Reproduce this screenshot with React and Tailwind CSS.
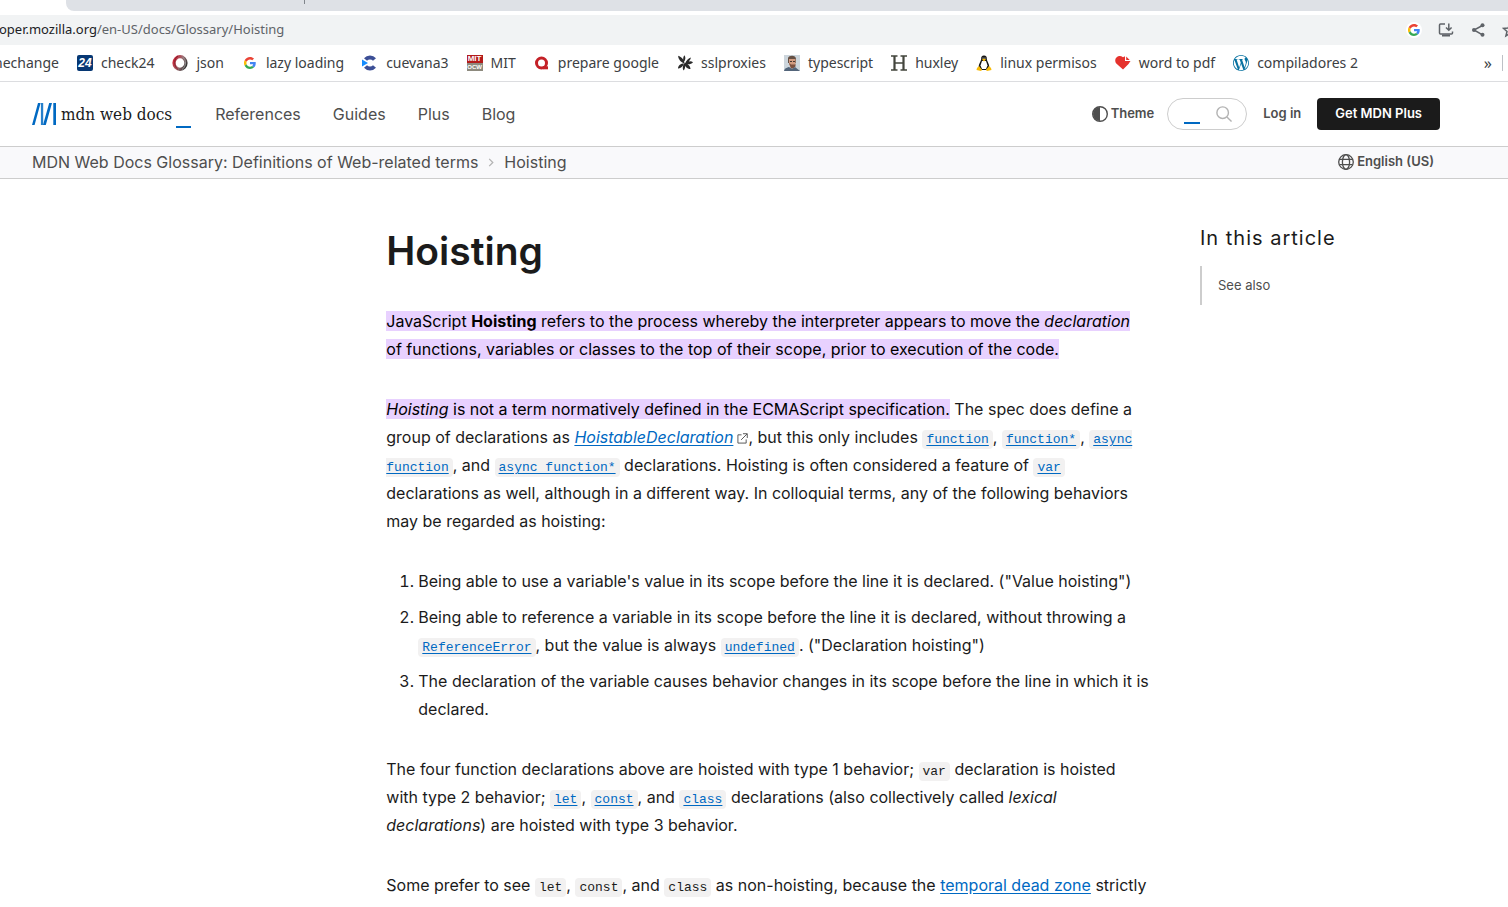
const link = "text-[#0069c2] underline underline-offset-2";

function Code({ children, href }) {
  const code = (
    <code className="rounded bg-[#f2f1f1] px-1 py-[2px] font-['Liberation_Mono',monospace] text-[13px] leading-none">{children}</code>
  );
  return href ? <a href="#" className={link}>{code}</a> : code;
}

function Google({ className }) {
  return (
    <svg viewBox="0 0 48 48" className={className} aria-hidden="true">
      <path fill="#EA4335" d="M24 9.5c3.5 0 6.7 1.2 9.2 3.6l6.9-6.9C35.9 2.4 30.5 0 24 0 14.6 0 6.5 5.4 2.6 13.2l8 6.2C12.4 13.7 17.7 9.5 24 9.5z" />
      <path fill="#4285F4" d="M47 24.5c0-1.6-.2-3.1-.4-4.5H24v9h12.9c-.6 3-2.200 5.500-4.700 7.200l7.700 6C44.400 38 47 31.800 47 24.500z" />
      <path fill="#FBBC05" d="M10.500 28.600a14.500 14.500 0 0 1 0-9.200l-8-6.200a24 24 0 0 0 0 21.600l8-6.200z" />
      <path fill="#34A853" d="M24 48c6.500 0 11.900-2.100 15.900-5.800l-7.700-6c-2.200 1.500-4.900 2.300-8.200 2.300-6.300 0-11.600-4.200-13.500-9.900l-8 6.200C6.500 42.600 14.600 48 24 48z" />
    </svg>
  );
}

const icons = {
  check24: (
    <span className="flex size-4 items-center justify-center rounded-xs bg-[#063773] font-['Liberation_Sans',sans-serif] text-xs font-bold italic text-white">24</span>
  ),
  json: (
    <svg viewBox="0 0 16 16" className="size-4" fill="none">
      <defs>
        <linearGradient id="jsonRing" x1="0" y1="0.3" x2="1" y2="0.8">
          <stop offset="0" stopColor="#c22b3c" />
          <stop offset="0.5" stopColor="#9b6b70" />
          <stop offset="1" stopColor="#333" />
        </linearGradient>
      </defs>
      <ellipse cx="8" cy="8" rx="6" ry="6.300" stroke="url(#jsonRing)" strokeWidth="3.200" />
      <path d="M6 1.200C1.800 3 1.500 11.500 6 14.500" stroke="#8b1d2c" strokeWidth="1" />
      <path d="M10.500 2c4 2.500 4 9.500-.5 12.500" stroke="#999" strokeWidth="1" />
    </svg>
  ),
  google: <span className="flex size-4 items-center justify-center"><Google className="size-3" /></span>,
  cuevana: (
    <svg viewBox="0 0 16 16" className="size-4" fill="none">
      <path d="M12.500 4.500A6 6 0 0 0 3.500 4.500M3.500 11.500a6 6 0 0 0 9 0" stroke="#3c4f96" strokeWidth="4" />
      <path d="M0 4.500l6 3.500-6 3.500z" fill="#158cff" />
    </svg>
  ),
  mit: (
    <span className="flex size-4 flex-col font-['Liberation_Sans',sans-serif] text-[8px] leading-[8px] font-bold text-white">
      <span className="flex h-2 justify-center bg-[#b31b1b]">MIT</span>
      <span className="flex h-2 justify-center overflow-hidden bg-[#8d8a7e] text-[6px]">OCW</span>
    </span>
  ),
  prepare: (
    <svg viewBox="0 0 16 16" className="size-4" fill="none" stroke="#c42127" strokeWidth="3">
      <circle cx="7.500" cy="8" r="5" />
      <path d="M9 12.800h5" />
    </svg>
  ),
  ssl: (
    <svg viewBox="0 0 16 16" className="size-4" fill="#2b2b2b">
      <path d="M7.500 8.500C4 7.500 1 4 1.200.800 4.500 2 7.500 5 7.500 8.500zM6.800 7C5.800 4 6 1.500 7.500.2 9 2.500 8.500 5 6.800 7zM8 8.500c1.500-3.500 3.500-5.500 6-6C13.500 5.500 11 7.500 8 8.500zM8 8.500c2.500-2.300 6-2.800 8-1.300C14 9.500 11 9.700 8 8.500zM7.500 8c3.500 1 6 3 6 6-3.500 0-6-2.500-6-6zM7.500 8.500c1 3 .8 5.500-1 7-1.300-2.500-.8-5 1-7zM7 8.300c-1 3.500-3.500 5.500-6 5.200 0-3 3-5 6-5.200z" />
    </svg>
  ),
  typescript: (
    <svg viewBox="0 0 16 16" className="size-4">
      <path fill="#ccd5dc" d="M0 0h16v16H0z" />
      <path fill="#655044" d="M4 3c1-3 8-3 8 1v4H4z" />
      <path fill="#d29b80" d="M5 4h6.500v5L9 13H7L5 9z" />
      <path fill="#7c5140" d="M5 8l2 1.500h4l.5-1v3L9 13.500H7z" />
      <path fill="#53657a" d="M0 16c1-3 2-3 5-4l3 2 3-2 5 4z" />
      <path fill="#46362f" d="M6 6h2v1H6zM9 6h2v1H9z" />
    </svg>
  ),
  huxley: (
    <svg viewBox="0 0 16 16" className="size-4" stroke="#43453d" fill="none">
      <path strokeWidth="2.200" d="M3.500 1v14M12.500 1v14" />
      <path strokeWidth="1.300" d="M0 1h6.500M0 15h6.500M9.500 1H16M9.500 15H16M4 8h8" />
    </svg>
  ),
  linux: (
    <svg viewBox="0 0 16 16" className="size-4">
      <path fill="#151515" d="M8 .5c2.200 0 3 1.500 2.800 3.500C11 7 14 9 13 13l-3 2H6l-3-2C2 9 5 7 5.200 4 5 2 5.800.5 8 .5z" />
      <path fill="#fff" d="M6 6h4l1.500 4.500L10 14H6l-1.500-3.500z" />
      <path fill="#f8bb08" d="M6 4.500L8 3.500l2 1L8 6.500zM3 11l3 4-1 1-4.500-1L1 13zM13 11l-3 4 1 1 4.500-1-.5-2z" />
      <circle cx="7" cy="3" r=".6" fill="#fff" /><circle cx="9" cy="3" r=".6" fill="#fff" />
    </svg>
  ),
  heart: (
    <svg viewBox="0 0 16 16" className="size-4">
      <path fill="#e5322d" d="M8 14.500L1.300 8.500C-2 4.500 3-1.500 8 2.300L10 1.300V6h5.500L13.500 9z" />
      <path fill="#e5322d" d="M11.200 1.500l3.500 3.500h-3.500z" />
    </svg>
  ),
  wordpress: (
    <svg viewBox="0 0 24 24" className="size-4">
      <path fill="#0872a1" d="M21.469 6.825c.84 1.537 1.318 3.300 1.318 5.175 0 3.979-2.156 7.456-5.363 9.325l3.295-9.527c.615-1.540.820-2.771.820-3.864 0-.405-.026-.780-.070-1.110m-7.981.105c.647-.030 1.232-.105 1.232-.105.582-.075.514-.930-.067-.899 0 0-1.755.135-2.880.135-1.064 0-2.850-.150-2.850-.150-.585-.030-.661.855-.075.885 0 0 .540.061 1.125.090l1.680 4.605-2.370 7.080L5.354 6.900c.649-.030 1.234-.100 1.234-.100.585-.075.516-.930-.065-.896 0 0-1.746.138-2.874.138-.200 0-.438-.008-.690-.015C4.911 3.150 8.235 1.215 12 1.215c2.809 0 5.365 1.072 7.286 2.833-.046-.003-.091-.009-.141-.009-1.060 0-1.812.923-1.812 1.914 0 .890.513 1.643 1.060 2.531.411.720.890 1.643.890 2.977 0 .915-.354 1.994-.821 3.479l-1.075 3.585-3.900-11.610zM12 22.784c-1.059 0-2.081-.153-3.048-.437l3.237-9.406 3.315 9.087c.024.053.050.101.078.149-1.120.393-2.325.609-3.582.609M1.211 12c0-1.564.336-3.050.935-4.390L7.290 21.709C3.694 19.960 1.212 16.271 1.211 12M12 0C5.385 0 0 5.385 0 12s5.385 12 12 12 12-5.385 12-12S18.615 0 12 0" />
    </svg>
  ),
};

const bookmarks = [
  ["check24", "check24"],
  ["json", "json"],
  ["google", "lazy loading"],
  ["cuevana", "cuevana3"],
  ["mit", "MIT"],
  ["prepare", "prepare google"],
  ["ssl", "sslproxies"],
  ["typescript", "typescript"],
  ["huxley", "huxley"],
  ["linux", "linux permisos"],
  ["heart", "word to pdf"],
  ["wordpress", "compiladores 2"],
];

function BrowserChrome() {
  return (
    <div className="overflow-hidden font-['Noto_Sans',sans-serif]">
      <div className="flex h-[11px] pl-[66px]">
        <div className="flex flex-1 rounded-bl-lg bg-[#dee1e6] pl-[238px]">
          <span className="h-1 w-px bg-[#80858b]" />
        </div>
      </div>
      <div className="mt-1 flex h-[30px] items-center justify-between bg-[#f1f3f4]">
        <div className="-ml-px text-[13px] whitespace-nowrap text-[#5f6368]">
          <span className="text-[#202124]">oper.mozilla.org</span>/en-US/docs/Glossary/Hoisting
        </div>
        <div className="-mr-[10px] flex items-center gap-4 text-[#5f6368]">
          <button aria-label="Search with Google" className="flex size-4 items-center justify-center rounded-full bg-white"><Google className="size-3" /></button>
          <button aria-label="Install page">
            <svg viewBox="0 0 16 16" className="size-4" fill="none" stroke="currentColor" strokeWidth="1.500">
              <path d="M7 2H2.500q-1 0-1 1v8q0 1 1 1h11q1 0 1-1V9.500M10.800 1.500v6M8 5.500l2.800 2.800 2.800-2.800" />
              <path strokeWidth="2" d="M4 13.500h8" />
            </svg>
          </button>
          <button aria-label="Share">
            <svg viewBox="0 0 16 16" className="size-4" fill="currentColor">
              <path fill="none" stroke="currentColor" strokeWidth="1.500" d="M12.500 3.500L4 8l8.500 4.800" />
              <circle cx="12.500" cy="3.300" r="2" /><circle cx="4" cy="8" r="2" /><circle cx="12.500" cy="12.800" r="2" />
            </svg>
          </button>
          <button aria-label="Bookmark this tab">
            <svg viewBox="0 0 16 16" className="size-4" fill="none" stroke="currentColor" strokeWidth="1.500">
              <path d="M8 1.800l1.900 4.200 4.600.4-3.500 3 1.100 4.500L8 11.500l-4.100 2.400L5 9.400l-3.500-3 4.600-.4z" />
            </svg>
          </button>
        </div>
      </div>
      <div className="flex h-[37px] items-center border-b border-[#dcdde0] text-sm whitespace-nowrap text-[#3c4043]">
        <a href="#" className="-ml-[6px]">nechange</a>
        {bookmarks.map(([icon, label]) => (
          <a key={label} href="#" className="ml-[18px] flex items-center gap-2">
            {icons[icon]}
            {label}
          </a>
        ))}
        <button aria-label="More bookmarks" className="ml-auto text-base">»</button>
        <span className="mr-[5px] ml-[10px] h-4 w-px bg-[#bdc1c6]" />
      </div>
    </div>
  );
}

function Header() {
  return (
    <header className="border-b border-[#cdcdcd]">
      <div className="flex h-16 max-w-[1472px] items-center px-8 text-[#4e4e4e]">
        <a href="#" className="flex items-center text-[#1b1b1b]">
          <svg viewBox="0 0 24 22" className="h-[22px] w-6" fill="#0069c2" aria-hidden="true">
            <path d="M6 0h2.600L2.600 22H0zM17.200 0h2.800L13.800 22H11zM21.300 0H24v22h-2.700z" />
            <path d="M8.900 0h2.300v22H8.900z" opacity="0.85" />
          </svg>
          <span className="mt-px ml-[5px] font-['DejaVu_Serif_Condensed','DejaVu_Serif',serif] text-[17px]">mdn web docs</span>
          <span className="mt-[26px] ml-1 h-[2px] w-[15px] bg-[#0069c2]" />
        </a>
        <nav className="ml-6 flex gap-8">
          <a href="#">References</a>
          <a href="#">Guides</a>
          <a href="#">Plus</a>
          <a href="#">Blog</a>
        </nav>
        <div className="ml-auto flex items-center gap-4 text-[13px] font-semibold">
          <button className="-mr-[3px] flex items-center gap-[3px]">
            <svg viewBox="0 0 16 16" className="size-4" aria-hidden="true">
              <circle cx="8" cy="8" r="7.300" fill="none" stroke="currentColor" strokeWidth="1.400" />
              <path d="M8 1a7 7 0 0 0 0 14z" fill="currentColor" />
            </svg>
            Theme
          </button>
          <label className="flex h-8 w-20 items-center rounded-full border border-[#cdcdcd] pr-[14px] pl-4">
            <span className="mt-[17px] h-[2px] w-4 shrink-0 bg-[#0069c2]" />
            <input type="search" aria-label="Search" className="w-0 min-w-0 flex-1 outline-none" />
            <svg viewBox="0 0 18 18" className="size-4" fill="none" stroke="#b3b3b3" strokeWidth="1.600" aria-hidden="true">
              <circle cx="7.500" cy="7.500" r="6.500" />
              <path d="M12.300 12.300L17.500 17.500" />
            </svg>
          </label>
          <a href="#">Log in</a>
          <a href="#" className="flex h-8 items-center rounded bg-[#1b1b1b] px-[18px] text-white">Get MDN Plus</a>
        </div>
      </div>
    </header>
  );
}

function Breadcrumbs() {
  return (
    <div className="border-b border-[#cdcdcd] bg-[#f9f9fb]">
      <div className="flex h-[31px] max-w-[1472px] items-center justify-between px-8 pb-[2px] text-[#4e4e4e]">
        <nav className="flex items-center">
          <a href="#">MDN Web Docs Glossary: Definitions of Web-related terms</a>
          <svg viewBox="0 0 6 10" className="mx-[10px] mt-px h-[9px] w-[6px]" fill="none" stroke="#b3b3b3" strokeWidth="1.400" aria-hidden="true">
            <path d="M1 1l4 4-4 4" />
          </svg>
          <a href="#">Hoisting</a>
        </nav>
        <button className="mr-[6px] flex items-center gap-[3px] text-[13px] font-semibold">
          <svg viewBox="0 0 16 16" className="size-4" fill="none" stroke="currentColor" strokeWidth="1.300" aria-hidden="true">
            <circle cx="8" cy="8" r="7.300" />
            <ellipse cx="8" cy="8" rx="3.600" ry="7.300" />
            <path d="M1.500 5.300h13M1.500 10.700h13" />
          </svg>
          English (US)
        </button>
      </div>
    </div>
  );
}

function Article() {
  return (
    <main className="col-start-2 pr-[2px] leading-7 text-[#1b1b1b]">
      <h1 className="mt-12 mb-8 text-[39px] leading-[48px] font-semibold">Hoisting</h1>
      <p className="mb-8">
        <mark className="bg-[#e8d1ff] text-black">
          JavaScript <strong className="font-bold">Hoisting</strong> refers to the process whereby the interpreter appears to move the <em>declaration</em><br />
          of functions, variables or classes to the top of their scope, prior to execution of the code.
        </mark>
      </p>
      <p className="mb-8">
        <mark className="bg-[#e8d1ff] text-black"><em>Hoisting</em> is not a term normatively defined in the ECMAScript specification.</mark> The spec does define a group of declarations as{" "}
        <a href="#" className={link}><em>HoistableDeclaration</em></a>
        <svg viewBox="0 0 12 12" className="ml-1 inline size-[11px] align-[-1px]" fill="none" stroke="#4e4e4e" aria-hidden="true">
          <path d="M5 2H1v9h9V7M6.500 .8H11.200V5.500M11 1L4.500 7.500" />
        </svg>
        , but this only includes <Code href>function</Code>, <Code href>function*</Code>, <Code href>async function</Code>, and <Code href>async function*</Code> declarations. Hoisting is often considered a feature of <Code href>var</Code> declarations as well, although in a different way. In colloquial terms, any of the following behaviors may be regarded as hoisting:
      </p>
      <ol className="mb-8 flex list-decimal flex-col gap-2 pl-8">
        <li>Being able to use a variable's value in its scope before the line it is declared. ("Value hoisting")</li>
        <li>
          Being able to reference a variable in its scope before the line it is declared, without throwing a <Code href>ReferenceError</Code>, but the value is always <Code href>undefined</Code>. ("Declaration hoisting")
        </li>
        <li>The declaration of the variable causes behavior changes in its scope before the line in which it is declared.</li>
      </ol>
      <p className="mb-8">
        The four function declarations above are hoisted with type 1 behavior; <Code>var</Code> declaration is hoisted with type 2 behavior; <Code href>let</Code>, <Code href>const</Code>, and <Code href>class</Code> declarations (also collectively called <em>lexical declarations</em>) are hoisted with type 3 behavior.
      </p>
      <p>
        Some prefer to see <Code>let</Code>, <Code>const</Code>, and <Code>class</Code> as non-hoisting, because the <a href="#" className={link}>temporal dead zone</a> strictly
      </p>
    </main>
  );
}

export default function App() {
  return (
    <div className="h-screen overflow-hidden bg-white font-['Inter',sans-serif]">
      <BrowserChrome />
      <Header />
      <Breadcrumbs />
      <div className="grid max-w-[1472px] grid-cols-[minmax(0,1fr)_minmax(0,2.5fr)_240px] gap-x-12 px-8">
        <Article />
        <aside className="pt-[45px]">
          <h2 className="text-xl leading-7 font-normal tracking-wider text-[#1b1b1b]">In this article</h2>
          <a href="#" className="mt-[14px] flex h-[39px] items-center border-l-2 border-[#cdcdcd] pl-4 text-[13px] text-[#4e4e4e]">See also</a>
        </aside>
      </div>
    </div>
  );
}
